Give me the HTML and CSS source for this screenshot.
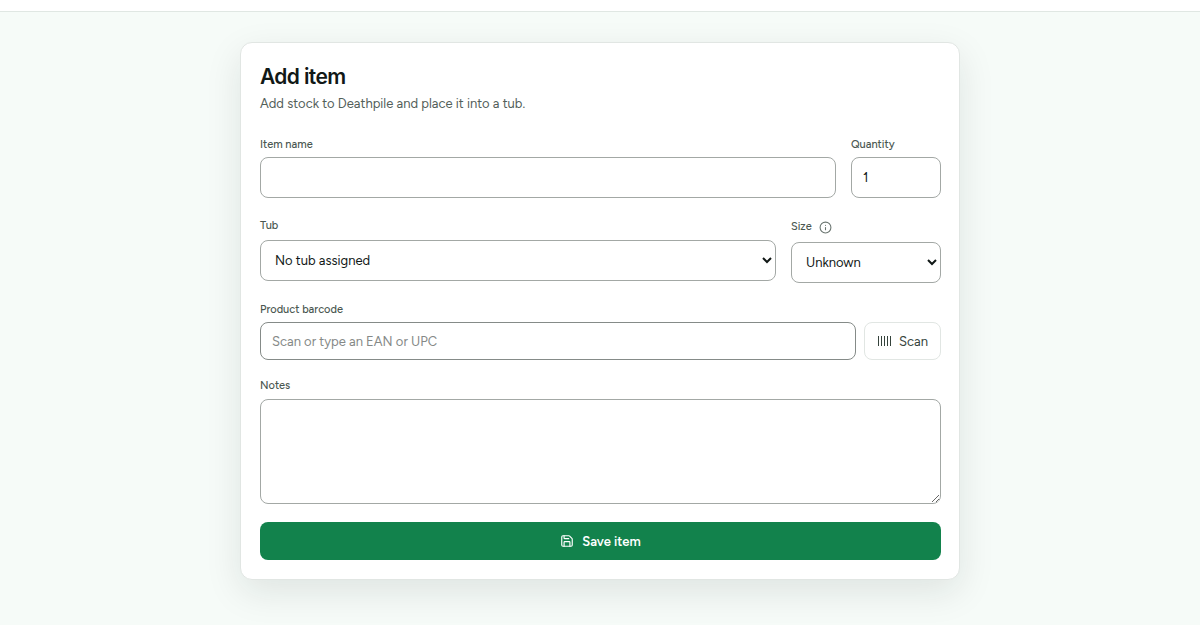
FILE: index.html
```html
<!DOCTYPE html>
<html lang="en">
<head>
<meta charset="utf-8">
<meta name="viewport" content="width=device-width, initial-scale=1">
<title>Add item</title>
<link rel="stylesheet" href="styles.css">
</head>
<body>
<header class="topbar"></header>
<main class="page">
  <form class="card">
    <h1 class="title">Add item</h1>
    <p class="subtitle">Add stock to Deathpile and place it into a tub.</p>
    <div class="row row-name">
      <div class="field">
        <label class="label" for="name">Item name</label>
        <input class="control" id="name" type="text">
      </div>
      <div class="field">
        <label class="label" for="quantity">Quantity</label>
        <input class="control" id="quantity" type="text" inputmode="numeric" value="1">
      </div>
    </div>
    <div class="row row-tub">
      <div class="field field-select">
        <label class="label" for="tub">Tub</label>
        <select class="control select" id="tub"><option>No tub assigned</option></select>
      </div>
      <div class="field field-select">
        <div class="label-line">
          <label class="label" for="size">Size</label>
          <svg class="info" viewBox="0 0 24 24" aria-hidden="true"><circle cx="12" cy="12" r="10"/><path d="M12 16v-4M12 8h.01"/></svg>
        </div>
        <select class="control select" id="size"><option>Unknown</option></select>
      </div>
    </div>
    <div class="field field-barcode">
      <label class="label" for="barcode">Product barcode</label>
      <div class="scan-row">
        <input class="control control-barcode" id="barcode" type="text" placeholder="Scan or type an EAN or UPC">
        <button class="button button-scan" type="button">
          <svg class="icon" viewBox="0 0 14 14" aria-hidden="true"><path d="M1.5 2v10M4.5 2v10M7.5 2v10M10.5 2v10M13.5 2v10"/></svg>
          Scan
        </button>
      </div>
    </div>
    <div class="field field-notes">
      <label class="label" for="notes">Notes</label>
      <textarea class="control notes" id="notes"></textarea>
    </div>
    <button class="button button-save" type="submit">
      <svg class="icon icon-save" viewBox="0 0 24 24" aria-hidden="true"><path d="M15.2 3a2 2 0 0 1 1.4.6l3.8 3.8a2 2 0 0 1 .6 1.4V19a2 2 0 0 1-2 2H5a2 2 0 0 1-2-2V5a2 2 0 0 1 2-2z"/><path d="M17 21v-7a1 1 0 0 0-1-1H8a1 1 0 0 0-1 1v7M7 3v4a1 1 0 0 0 1 1h7"/></svg>
      Save item
    </button>
  </form>
</main>
</body>
</html>
```
FILE: styles.css
```css
* {
  box-sizing: border-box;
}

body {
  margin: 0;
  min-height: 100vh;
  background: #f6fbf8;
  color: #111816;
  font-family: Figtree, Inter, sans-serif;
  font-size: 13px;
}

.topbar {
  height: 12px;
  background: #fff;
  border-bottom: 1px solid #e0e7e3;
}

.page {
  padding: 30px 20px 45px;
}

.card {
  max-width: 720px;
  margin: 0 auto;
  padding: 19px 18px 19px 19px;
  background: #fff;
  border: 1px solid #e1e6e3;
  border-radius: 12px;
  box-shadow: 0 12px 36px rgba(20, 30, 25, 0.1);
}

.title {
  margin: 0;
  font-family: Inter, sans-serif;
  font-size: 21px;
  line-height: 30px;
  font-weight: 600;
  letter-spacing: -0.03em;
}

.subtitle {
  margin: 2px 0 21px;
  font-size: 13px;
  line-height: 20px;
  color: #53605a;
}

.row {
  display: grid;
  gap: 15px;
}

.row-name {
  grid-template-columns: 1fr 90px;
}

.row-tub {
  grid-template-columns: 1fr 150px;
  align-items: start;
  margin-top: 18px;
}

.field {
  display: flex;
  flex-direction: column;
  gap: 2px;
  min-width: 0;
}

.field-select {
  gap: 4px;
}

.field-barcode {
  margin-top: 17px;
}

.field-notes {
  gap: 3px;
  margin-top: 16px;
}

.label {
  font-size: 11px;
  line-height: 20px;
  font-weight: 500;
  color: #4a5751;
}

.label-line {
  display: flex;
  align-items: center;
  gap: 7px;
  height: 22px;
}

.info {
  width: 13px;
  height: 13px;
  fill: none;
  stroke: #6b7671;
  stroke-width: 2;
  stroke-linecap: round;
}

.control {
  width: 100%;
  height: 41px;
  margin: 0;
  padding: 0 11px;
  background: #fff;
  border: 1px solid #a3a8a5;
  border-radius: 8px;
  color: #111816;
  font: inherit;
}

.select {
  padding: 0 0 0 10px;
}

.control-barcode {
  flex: 1;
  height: 38px;
  border-color: #858b88;
}

.control-barcode::placeholder {
  color: #858987;
}

.scan-row {
  display: flex;
  gap: 8px;
}

.notes {
  display: block;
  height: 105px;
  padding: 10px 11px;
  resize: vertical;
}

.button {
  display: flex;
  align-items: center;
  justify-content: center;
  gap: 8px;
  height: 38px;
  border-radius: 8px;
  font: inherit;
}

.button-scan {
  padding: 0 12px;
  background: #fff;
  border: 1px solid #e1e6e3;
  color: #35433c;
}

.button-save {
  width: 100%;
  margin-top: 18px;
  padding: 0;
  background: #12824c;
  border: 0;
  color: #fff;
  font-weight: 600;
}

.icon {
  width: 14px;
  height: 14px;
  fill: none;
  stroke: currentColor;
  stroke-width: 1;
}

.icon-save {
  stroke-width: 2;
  stroke-linecap: round;
  stroke-linejoin: round;
}
```
